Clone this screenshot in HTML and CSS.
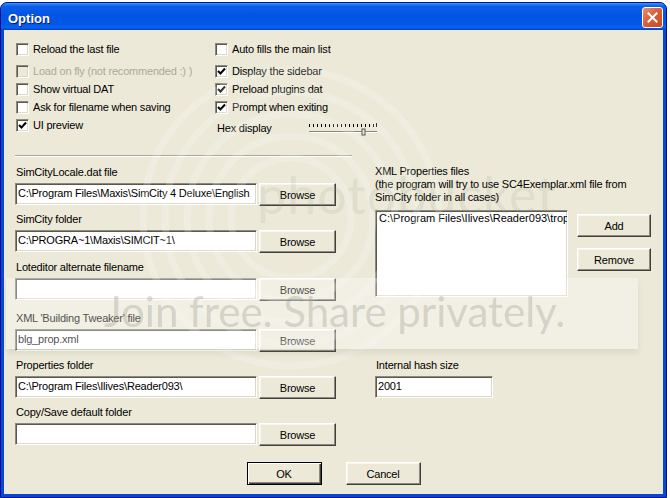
FILE: index.html
```html
<!DOCTYPE html>
<html lang="en">
<head>
  <meta charset="UTF-8">
  <title>Option</title>
  <link rel="stylesheet" href="styles.css">
</head>
<body>
  <div class="window">
    <div class="titlebar">
      <span class="title">Option</span>
      <span class="close">
        <svg width="11" height="11" viewBox="0 0 11 11"><path d="M1.5 1.5 L9.5 9.5 M9.5 1.5 L1.5 9.5" stroke="#fff" stroke-width="2" stroke-linecap="square"/></svg>
      </span>
    </div>

    <div class="client">
      <div class="options">
        <div class="opt-col">
          <label class="check"><span class="box"></span>Reload the last file</label>
          <label class="check disabled spaced"><span class="box"></span>Load on fly (not recommended :) )</label>
          <label class="check"><span class="box"></span>Show virtual DAT</label>
          <label class="check"><span class="box"></span>Ask for filename when saving</label>
          <label class="check"><span class="box"><svg class="tick" width="9" height="9" viewBox="0 0 9 9"><path d="M1 4 L3.5 6.5 L8 1.5" fill="none" stroke="#000" stroke-width="2"/></svg></span>UI preview</label>
        </div>
        <div class="opt-col">
          <label class="check"><span class="box"></span>Auto fills the main list</label>
          <label class="check spaced"><span class="box"><svg class="tick" width="9" height="9" viewBox="0 0 9 9"><path d="M1 4 L3.5 6.5 L8 1.5" fill="none" stroke="#000" stroke-width="2"/></svg></span>Display the sidebar</label>
          <label class="check"><span class="box"><svg class="tick" width="9" height="9" viewBox="0 0 9 9"><path d="M1 4 L3.5 6.5 L8 1.5" fill="none" stroke="#000" stroke-width="2"/></svg></span>Preload plugins dat</label>
          <label class="check"><span class="box"><svg class="tick" width="9" height="9" viewBox="0 0 9 9"><path d="M1 4 L3.5 6.5 L8 1.5" fill="none" stroke="#000" stroke-width="2"/></svg></span>Prompt when exiting</label>
          <div class="hex">
            <span class="hex-label">Hex display</span>
            <!-- trackbar: ticks on top, channel and thumb below -->
            <svg class="slider" width="70" height="14" viewBox="0 0 70 14">
              <g stroke="#000" stroke-width="1">
                <path d="M1.5 2v3 M5.5 2v3 M9.5 2v3 M13.5 2v3 M17.5 2v3 M21.5 2v3 M25.5 2v3 M29.5 2v3 M33.5 2v3 M37.5 2v3 M41.5 2v3 M45.5 2v3 M49.5 2v3 M53.5 2v3 M57.5 2v3 M61.5 2v3 M65.5 2v3 M68.5 1v4"/>
              </g>
              <path d="M1 9.5 H69" stroke="#8a8778" stroke-width="1"/>
              <path d="M1 10.5 H69" stroke="#fff" stroke-width="1"/>
              <rect x="54" y="7" width="3" height="6" fill="#ece9d8" stroke="#555" stroke-width="1"/>
            </svg>
          </div>
        </div>
      </div>

      <div class="sep"></div>

      <div class="files">
        <div class="paths">
          <div class="field">
            <div class="label">SimCityLocale.dat file</div>
            <div class="field-row"><div class="input">C:\Program Files\Maxis\SimCity 4 Deluxe\English</div><div class="btn">Browse</div></div>
          </div>
          <div class="field">
            <div class="label">SimCity folder</div>
            <div class="field-row"><div class="input">C:\PROGRA~1\Maxis\SIMCIT~1\</div><div class="btn">Browse</div></div>
          </div>
          <div class="field lower1">
            <div class="label">Loteditor alternate filename</div>
            <div class="field-row"><div class="input"></div><div class="btn">Browse</div></div>
          </div>
          <div class="field lower4">
            <div class="label">XML 'Building Tweaker' file</div>
            <div class="field-row"><div class="input">blg_prop.xml</div><div class="btn">Browse</div></div>
          </div>
          <div class="field">
            <div class="label">Properties folder</div>
            <div class="field-row"><div class="input">C:\Program Files\Ilives\Reader093\</div><div class="btn">Browse</div></div>
          </div>
          <div class="field">
            <div class="label">Copy/Save default folder</div>
            <div class="field-row"><div class="input"></div><div class="btn">Browse</div></div>
          </div>
        </div>

        <div class="xml">
          <div class="note">
            XML Properties files<br>
            (the program will try to use SC4Exemplar.xml file from<br>
            SimCity folder in all cases)
          </div>
          <div class="list-row">
            <div class="listbox"><div class="item">C:\Program Files\Ilives\Reader093\tropical_props.xml</div></div>
            <div class="list-btns">
              <div class="btn">Add</div>
              <div class="btn">Remove</div>
            </div>
          </div>
          <div class="field hash">
            <div class="label">Internal hash size</div>
            <div class="input small">2001</div>
          </div>
        </div>
      </div>

      <div class="actions">
        <div class="btn default">OK</div>
        <div class="btn">Cancel</div>
      </div>
    </div>

    <!-- host watermark stamped over the dialog -->
    <div class="stamp">
      <svg class="rings" width="340" height="340" viewBox="0 0 340 340">
        <g fill="none" stroke="#fff" stroke-opacity="0.2" stroke-width="7">
          <circle cx="170" cy="170" r="60"/>
          <circle cx="170" cy="170" r="82"/>
          <circle cx="170" cy="170" r="104"/>
          <circle cx="170" cy="170" r="126"/>
          <circle cx="170" cy="170" r="148"/>
        </g>
      </svg>
      <div class="brand">photobucket</div>
      <div class="band"><span>Join free. Share privately.</span></div>
    </div>
  </div>
</body>
</html>
```

FILE: styles.css
```css
body {
  margin: 0;
  background: #fff;
  font-family: 'Liberation Sans', Arial, sans-serif;
  font-size: 11px;
  letter-spacing: -0.2px;
  color: #000;
}

.window {
  position: relative;
  width: 667px;
  height: 496px;
  margin-top: 2px;
  box-sizing: border-box;
  display: flex;
  flex-direction: column;
  background: #0846d8;
  border: 1px solid #00138c;
  border-radius: 7px 7px 0 0;
  overflow: hidden;
}

.titlebar {
  height: 27px;
  flex: none;
  display: flex;
  justify-content: space-between;
  align-items: flex-start;
  padding: 0 3px 0 7px;
  background: linear-gradient(#3d95ff 0%, #0a5fe8 12%, #0354e3 45%, #0358e8 80%, #0a62f0 90%, #0041c9 100%);
}
.title {
  margin-top: 8px;
  color: #fff;
  font-size: 13px;
  font-weight: bold;
  letter-spacing: 0;
  text-shadow: 1px 1px #0a1a7a;
}
.close {
  margin-top: 4px;
  width: 21px;
  height: 21px;
  box-sizing: border-box;
  display: flex;
  align-items: center;
  justify-content: center;
  border: 1px solid #fff;
  border-radius: 3px;
  background: linear-gradient(135deg, #e8906c 0%, #d5623c 45%, #c24a22 100%);
}

.client {
  flex: 1;
  margin: 0 3px 3px;
  background: #ece9d8;
  display: flex;
  flex-direction: column;
}

/* check boxes at the top */
.options {
  display: grid;
  grid-template-columns: 199px auto;
  padding: 10px 0 0 12px;
}
.check {
  height: 18px;
  display: flex;
  align-items: center;
}
.check.spaced {
  margin-top: 4px;
}
.box {
  width: 13px;
  height: 13px;
  box-sizing: border-box;
  margin-right: 4px;
  display: flex;
  align-items: center;
  justify-content: center;
  background: #fff;
  border: 1px solid;
  border-color: #8d8a7c #fff #fff #8d8a7c;
  box-shadow: inset 1px 1px #5a584e, inset -1px -1px #dcd9c8;
}
.check.disabled {
  color: #aca899;
}
.check.disabled .box {
  background: #ece9d8;
}

.hex {
  height: 22px;
  display: flex;
  align-items: center;
  padding-left: 2px;
}
.hex-label {
  width: 91px;
  padding-top: 2px;
}
.slider {
  margin-top: 4px;
}

.sep {
  width: 337px;
  height: 1px;
  margin: 17px 0 8px 11px;
  background: #aca899;
  border-bottom: 1px solid #fff;
}

/* path fields and xml list */
.files {
  display: flex;
}
.paths {
  width: 325px;
  padding-left: 11px;
  display: flex;
  flex-direction: column;
  gap: 6px;
}
.field.lower1 {
  margin-top: 1px;
}
.field.lower4 {
  margin-top: 4px;
}
.label {
  height: 14px;
  margin-bottom: 4px;
  padding-left: 1px;
  line-height: 14px;
}
.field-row {
  display: flex;
  align-items: flex-start;
}
.input {
  width: 242px;
  height: 22px;
  box-sizing: border-box;
  padding: 0 0 0 2px;
  line-height: 18px;
  white-space: nowrap;
  overflow: hidden;
  background: #fff;
  border: 1px solid;
  border-color: #8d8a7c #fff #fff #8d8a7c;
  box-shadow: inset 1px 1px #5a584e, inset -1px -1px #dcd9c8;
}
.input.small {
  width: 118px;
}

.btn {
  width: 77px;
  height: 23px;
  box-sizing: border-box;
  display: flex;
  align-items: center;
  justify-content: center;
  background: #ece9d8;
  border: 1px solid;
  border-color: #fff #404040 #404040 #fff;
  box-shadow: inset -1px -1px #8d8a7c, inset 1px 1px #f6f5ee;
}
.field-row .btn {
  margin-left: 2px;
}

.xml {
  margin-left: 35px;
  width: 276px;
}
.note {
  line-height: 13px;
}
.list-row {
  display: flex;
  margin-top: 6px;
}
.listbox {
  width: 193px;
  height: 87px;
  box-sizing: border-box;
  padding: 1px 0 0 2px;
  line-height: 13px;
  white-space: nowrap;
  overflow: hidden;
  background: #fff;
  border: 1px solid;
  border-color: #8d8a7c #fff #fff #8d8a7c;
  box-shadow: inset 1px 1px #5a584e, inset -1px -1px #dcd9c8;
}
.item {
  padding-left: 1px;
  letter-spacing: 0;
}
.list-btns {
  margin-left: 9px;
  padding-top: 4px;
  display: flex;
  flex-direction: column;
  gap: 11px;
}
.list-btns .btn {
  width: 74px;
}
.field.hash {
  margin-top: 61px;
}

.actions {
  display: flex;
  justify-content: center;
  gap: 24px;
  margin-top: 16px;
}
.actions .btn {
  width: 75px;
}
.btn.default {
  border: 1px solid #000;
  box-shadow: inset 1px 1px #fff, inset -1px -1px #404040, inset -2px -2px #8d8a7c;
}

/* watermark layer */
.stamp {
  position: absolute;
  inset: 0;
  pointer-events: none;
}
.rings {
  position: absolute;
  left: 120px;
  top: 45px;
}
.brand {
  position: absolute;
  left: 256px;
  top: 160px;
  font-family: Lato, sans-serif;
  font-size: 52px;
  color: rgba(150, 148, 136, 0.14);
  letter-spacing: 1px;
}
.band {
  position: absolute;
  left: 5px;
  top: 275px;
  width: 632px;
  height: 71px;
  background: rgba(255, 255, 255, 0.3);
  box-shadow: 0 4px 6px rgba(120, 118, 104, 0.15);
}
.band span {
  position: absolute;
  left: 98px;
  top: 8px;
  font-family: Lato, sans-serif;
  font-size: 42px;
  letter-spacing: 0;
  color: rgba(150, 148, 136, 0.32);
  white-space: nowrap;
}
```
